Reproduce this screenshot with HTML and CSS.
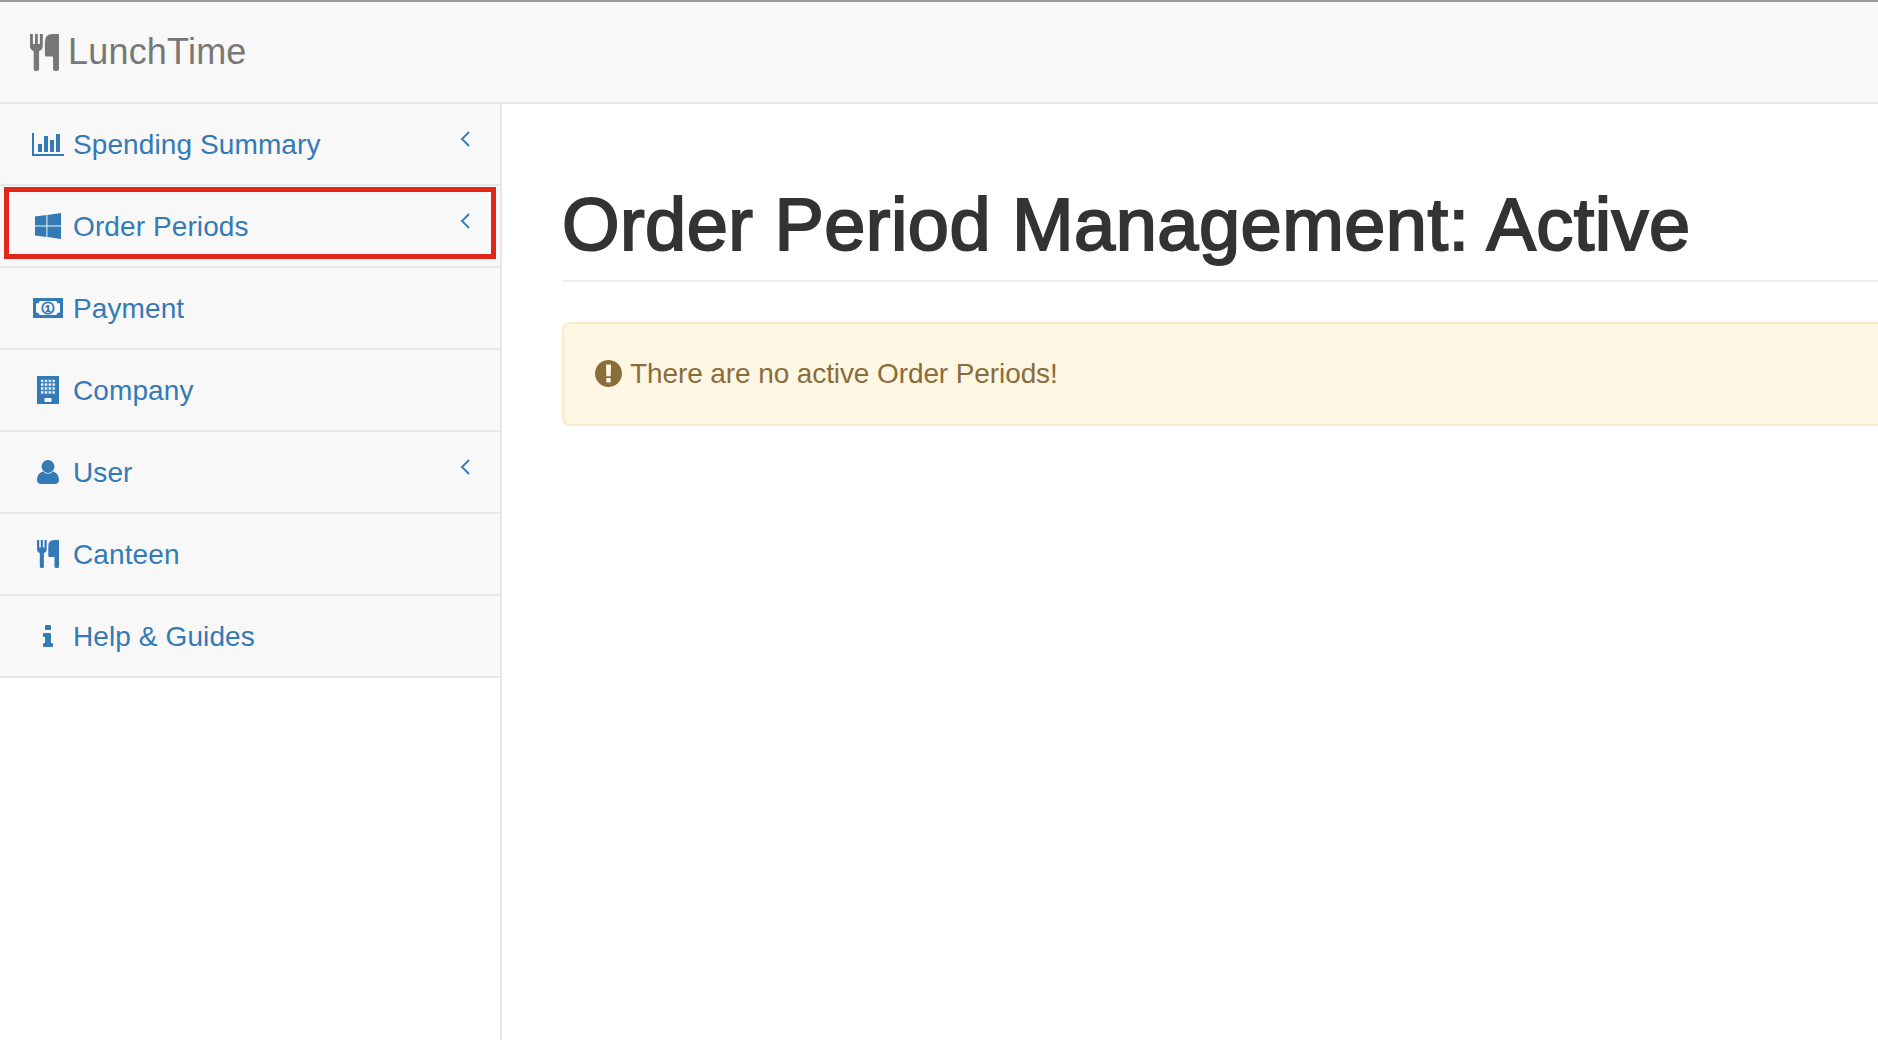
FILE: index.html
```html
<!DOCTYPE html>
<html lang="en">
<head>
    <meta charset="UTF-8">
    <meta name="viewport" content="width=device-width, initial-scale=1.0">
    <title>LunchTime</title>
    <link rel="stylesheet" href="styles.css">
</head>
<body>

<nav class="navbar">
    <a class="brand" href="#">
        <svg class="brand-icon" viewBox="0 0 22 28"><path d="M0 0H2.2V7.5H3.8V0H5.9V7.5H7.5V0H9.7V9.5Q9.7 12 6.9 13V26.5Q6.9 28 5.4 28H4.3Q2.8 28 2.8 26.5V13Q0 12 0 9.5ZM22 .5V26.5Q22 28 20.5 28H19Q17.5 28 17.5 26.5V17H12.5Q11.3 17 11.3 16V6Q11.3 0 17 0H21.5Q22 0 22 .5Z"/></svg>
        <span class="brand-name">LunchTime</span>
    </a>
</nav>

<div class="layout">
    <aside class="sidebar">
        <ul class="side-menu">
            <li>
                <a href="#">
                    <span class="menu-icon"><svg class="icon-chart" viewBox="0 128 2048 1536"><path d="M640 896v512h-256v-512h256zm384-512v1024h-256v-1024h256zm1024 1152v128h-2048v-1472h128v1344h1920zm-640-896v768h-256v-768h256zm384-384v1152h-256v-1152h256z"/></svg></span>
                    <span class="menu-label">Spending Summary</span>
                    <svg class="chevron" viewBox="0 0 10 16"><path d="M9 1 2 8l7 7"/></svg>
                </a>
            </li>
            <li class="highlighted">
                <a href="#">
                    <span class="menu-icon"><svg class="icon-windows" viewBox="0 0 26 26"><path d="M0 3.6 11.4 2.1v10.5H0zM12.4 1.9 26 0v12.6H12.4zM0 13.6h11.4v10.3L0 22.4zM12.4 13.6H26V26l-13.6-1.9z"/></svg></span>
                    <span class="menu-label">Order Periods</span>
                    <svg class="chevron" viewBox="0 0 10 16"><path d="M9 1 2 8l7 7"/></svg>
                </a>
            </li>
            <li>
                <a href="#">
                    <span class="menu-icon"><svg class="icon-money" viewBox="0 0 30 20"><path fill-rule="evenodd" d="M0 0h30v20H0zM6.500 3Q6.500 5.500 3 5.500v9Q6.500 14.500 6.500 17h17Q23.500 14.500 27 14.500v-9Q23.500 5.500 23.500 3z"/><circle cx="15" cy="10" r="6.600"/><circle class="icon-cut" cx="15" cy="10" r="4.800"/><path d="M12.800 14v-1.500h1.400V9l-1.200.7-.8-1.200 2.300-1.600h1.700v5.600h1.300V14z"/></svg></span>
                    <span class="menu-label">Payment</span>
                </a>
            </li>
            <li>
                <a href="#">
                    <span class="menu-icon"><svg class="icon-building" viewBox="0 0 22 28">
                        <defs><pattern id="windows" width="3.9" height="3.9" patternUnits="userSpaceOnUse" x="3.8" y="3.5"><rect width="2.5" height="2.5" class="icon-cut"/></pattern></defs>
                        <rect width="22" height="28"/>
                        <rect x="3.8" y="3.5" width="14.5" height="15" fill="url(#windows)"/>
                        <rect x="7.5" y="22" width="7" height="4" class="icon-cut"/>
                    </svg></span>
                    <span class="menu-label">Company</span>
                </a>
            </li>
            <li>
                <a href="#">
                    <span class="menu-icon"><svg class="icon-user" viewBox="0 0 22 24"><circle cx="11" cy="6.5" r="6.5"/><path d="M0 20C0 15.500 2.500 12 6.500 11.500 8 14.500 14 14.500 15.500 11.500 19.500 12 22 15.500 22 20 22 22.800 20.200 24 18 24H4C1.800 24 0 22.800 0 20Z"/></svg></span>
                    <span class="menu-label">User</span>
                    <svg class="chevron" viewBox="0 0 10 16"><path d="M9 1 2 8l7 7"/></svg>
                </a>
            </li>
            <li>
                <a href="#">
                    <span class="menu-icon"><svg class="icon-cutlery" viewBox="0 0 22 28"><path d="M0 0H2.2V7.5H3.8V0H5.9V7.5H7.5V0H9.7V9.5Q9.7 12 6.9 13V26.5Q6.9 28 5.4 28H4.3Q2.8 28 2.8 26.5V13Q0 12 0 9.5ZM22 .5V26.5Q22 28 20.5 28H19Q17.5 28 17.5 26.5V17H12.5Q11.3 17 11.3 16V6Q11.3 0 17 0H21.5Q22 0 22 .5Z"/></svg></span>
                    <span class="menu-label">Canteen</span>
                </a>
            </li>
            <li>
                <a href="#">
                    <span class="menu-icon"><svg class="icon-info" viewBox="576 128 640 1408"><path d="M1216 1344v128q0 26-19 45t-45 19h-512q-26 0-45-19t-19-45v-128q0-26 19-45t45-19h64v-384h-64q-26 0-45-19t-19-45v-128q0-26 19-45t45-19h384q26 0 45 19t19 45v576h64q26 0 45 19t19 45zm-128-1152v192q0 26-19 45t-45 19h-256q-26 0-45-19t-19-45v-192q0-26 19-45t45-19h256q26 0 45 19t19 45z"/></svg></span>
                    <span class="menu-label">Help &amp; Guides</span>
                </a>
            </li>
        </ul>
    </aside>

    <main class="content">
        <h1 class="page-header">Order Period Management: Active</h1>
        <div class="alert">
            <svg class="alert-icon" viewBox="128 128 1536 1536"><path d="M896 128q209 0 385.5 103t279.5 279.5 103 385.5-103 385.5-279.5 279.5-385.5 103-385.5-103-279.5-279.5-103-385.5 103-385.5 279.5-279.5 385.5-103zm128 1247v-190q0-14-9-23.5t-22-9.5h-192q-13 0-23 10t-10 23v190q0 13 10 23t23 10h192q13 0 22-9.5t9-23.5zm-2-344l18-621q0-12-10-18-10-8-24-8h-220q-14 0-24 8-10 6-10 18l17 621q0 10 10 17.5t24 7.5h185q14 0 23.5-7.5t11.5-17.5z"/></svg>
            <span class="alert-text">There are no active Order Periods!</span>
        </div>
    </main>
</div>

</body>
</html>
```

FILE: styles.css
```css
html, body {
    margin: 0;
    padding: 0;
    overflow-x: hidden;
}

body {
    font-family: "Liberation Sans", Arial, sans-serif;
    background-color: #fff;
    color: #333;
}

a {
    text-decoration: none;
}

.navbar {
    height: 100px;
    display: flex;
    align-items: center;
    background-color: #f8f8f8;
    border-top: 2px solid #999;
    border-bottom: 2px solid #e7e7e7;
}

.brand {
    display: flex;
    align-items: center;
    margin-left: 30px;
    color: #777;
    font-size: 36px;
}

.brand-icon {
    width: 29px;
    height: 37px;
    margin-right: 9px;
    fill: #777;
}

.brand-name {
    letter-spacing: 0.2px;
}

.layout {
    display: flex;
    min-height: 936px;
}

.sidebar {
    width: 500px;
    flex-shrink: 0;
    border-right: 2px solid #e7e7e7;
}

.side-menu {
    list-style: none;
    margin: 0;
    padding: 0;
}

.side-menu li {
    position: relative;
    background-color: #f8f8f8;
    border-bottom: 2px solid #e7e7e7;
}

.side-menu a {
    height: 80px;
    display: flex;
    align-items: center;
    padding: 0 30px 0 28px;
    color: #337ab7;
    font-size: 28px;
}

.highlighted::after {
    content: "";
    position: absolute;
    top: 1px;
    left: 4px;
    width: 482px;
    height: 62px;
    border: 5px solid #e0281a;
}

.menu-icon {
    width: 40px;
    margin-right: 5px;
    display: flex;
    justify-content: center;
    fill: #337ab7;
}

.menu-label {
    flex: 1;
    padding-top: 2px;
    letter-spacing: 0.1px;
}

.icon-chart {
    width: 32px;
    height: 24px;
}

.icon-windows {
    width: 26px;
    height: 26px;
}

.icon-money {
    width: 30px;
    height: 20px;
}

.icon-building {
    width: 22px;
    height: 28px;
    margin-right: 1px;
}

.icon-user {
    width: 22px;
    height: 24px;
}

.icon-cutlery {
    width: 22px;
    height: 28px;
}

.icon-info {
    width: 10px;
    height: 22px;
}

.icon-cut {
    fill: #f8f8f8;
}

.chevron {
    width: 10px;
    height: 16px;
    margin-bottom: 10px;
    fill: none;
    stroke: #337ab7;
    stroke-width: 1.8;
}

.content {
    flex: 1;
    min-width: 0;
    margin-right: -40px;
    padding-left: 60px;
}

.page-header {
    margin: 0;
    padding: 80px 0 15px;
    font-size: 74px;
    font-weight: 400;
    line-height: 1.1;
    letter-spacing: 0.45px;
    color: #333;
    -webkit-text-stroke: 2px #333;
    border-bottom: 2px solid #eee;
}

.alert {
    display: flex;
    align-items: center;
    gap: 8px;
    margin-top: 40px;
    padding: 30px 31px;
    height: 40px;
    font-size: 28px;
    color: #8a6d3b;
    background-color: #fdf6e2;
    border: 2px solid #faebcc;
    border-radius: 8px;
}

.alert-text {
    letter-spacing: -0.1px;
}

.alert-icon {
    width: 27px;
    height: 27px;
    margin-bottom: 2px;
    fill: #8a6d3b;
}
```
